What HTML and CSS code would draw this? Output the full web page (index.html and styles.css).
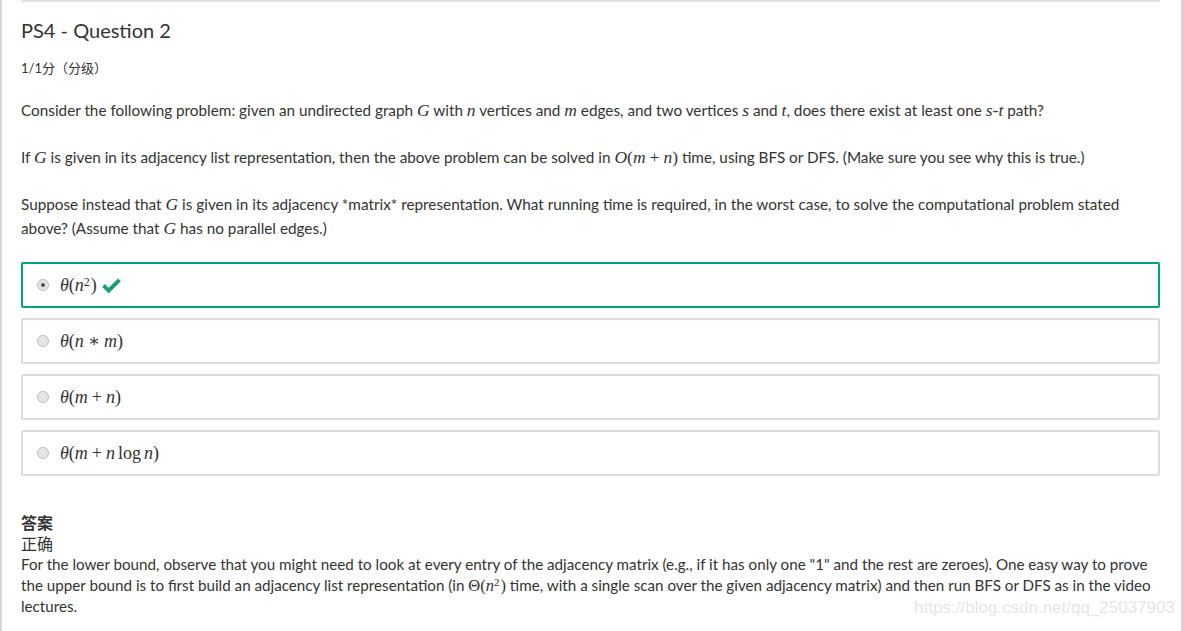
FILE: index.html
```html
<!DOCTYPE html>
<html lang="zh-CN">
<head>
  <meta charset="UTF-8" />
  <title>PS4 - Question 2</title>
  <link rel="stylesheet" href="styles.css">
</head>
<body>
  <div class="page">
    <div class="question">
      <h2 class="qTitle">PS4 - Question 2</h2>
      <div class="score">1/1分（分级）</div>

      <p class="first">Consider the following problem: given an undirected graph <span class="m">G</span> with <span class="m">n</span> vertices and <span class="m">m</span> edges, and two vertices <span class="m">s</span> and <span class="m">t</span>, does there exist at least one <span class="m">s</span><span class="r">-</span><span class="m">t</span> path?</p>
      <p>If <span class="m">G</span> is given in its adjacency list representation, then the above problem can be solved in <span class="m">O</span><span class="r">(</span><span class="m">m</span><span class="r op">+</span><span class="m">n</span><span class="r">)</span> time, using BFS or DFS. (Make sure you see why this is true.)</p>
      <p>Suppose instead that <span class="m">G</span> is given in its adjacency *matrix* representation. What running time is required, in the worst case, to solve the computational problem stated above? (Assume that <span class="m">G</span> has no parallel edges.)</p>

      <div class="options">
        <div class="option correct">
          <span class="radio checked"></span>
          <span class="math"><span class="m">θ</span><span class="r">(</span><span class="m">n</span><sup class="r">2</sup><span class="r">)</span></span>
          <svg class="check" viewBox="0 0 20 16" width="19" height="15"><path d="M1.5 8 L7 13.5 L18.5 2" fill="none" stroke="#1a9e77" stroke-width="4.2" stroke-linejoin="miter"/></svg>
        </div>
        <div class="option">
          <span class="radio"></span>
          <span class="math"><span class="m">θ</span><span class="r">(</span><span class="m">n</span><span class="r op">∗</span><span class="m">m</span><span class="r">)</span></span>
        </div>
        <div class="option">
          <span class="radio"></span>
          <span class="math"><span class="m">θ</span><span class="r">(</span><span class="m">m</span><span class="r op">+</span><span class="m">n</span><span class="r">)</span></span>
        </div>
        <div class="option">
          <span class="radio"></span>
          <span class="math"><span class="m">θ</span><span class="r">(</span><span class="m">m</span><span class="r op">+</span><span class="m">n</span><span class="r fn">log</span><span class="m">n</span><span class="r">)</span></span>
        </div>
      </div>

      <div class="answer">
        <div class="ansHead">答案</div>
        <div class="ansState">正确</div>
        <div class="ansText">For the lower bound, observe that you might need to look at every entry of the adjacency matrix (e.g., if it has only one "1" and the rest are zeroes). One easy way to prove the upper bound is to first build an adjacency list representation (in <span class="r">Θ(</span><span class="m">n</span><sup class="r">2</sup><span class="r">)</span> time, with a single scan over the given adjacency matrix) and then run BFS or DFS as in the video lectures.</div>
      </div>
      <div class="watermark">https://blog.csdn.net/qq_25037903</div>
    </div>
  </div>
</body>
</html>
```

FILE: styles.css
```css
/* page frame */
body {
  margin: 0;
  background: #fff;
  color: #333;
  font-family: "Source Sans Pro", Lato, "Noto Sans CJK SC", sans-serif;
}
.page {
  border-left: 2px solid #d6d6d6;
  border-right: 2px solid #d6d6d6;
  height: 631px;
  padding: 0 21px 0 19px;
  overflow: hidden;
}
.question {
  border-top: 2px solid #e2e2e2;
}
.qTitle {
  margin: 14px 0 0;
  font-size: 20px;
  font-weight: normal;
  line-height: 28px;
  color: #333;
}
.score {
  font-size: 13px;
  margin-top: 14px;
  line-height: 20px;
}
p {
  font-size: 15.3px;
  line-height: 24px;
  margin: 23px 0 0;
}
p.first {
  margin-top: 20px;
}
.m {
  font-family: "Liberation Serif", "DejaVu Serif", serif;
  font-style: italic;
  font-size: 17.5px;
}
.r {
  font-family: "Liberation Serif", "DejaVu Serif", serif;
  font-size: 17.5px;
}
.op {
  margin: 0 4px;
}
.fn {
  margin: 0 3px 0 3px;
}
sup.r {
  font-size: 12px;
  position: relative;
  top: -3px;
  vertical-align: top;
  margin-right: 1px;
}
.options {
  margin-top: 22px;
  display: flex;
  flex-direction: column;
  gap: 10px;
}
.option {
  border: 2px solid #dcdcdc;
  border-radius: 2px;
  height: 42px;
  display: flex;
  align-items: center;
  padding-left: 14px;
}
.option.correct {
  border-color: #00a37a;
}
.math {
  white-space: nowrap;
  line-height: 24px;
}
.math .m, .math .r {
  font-size: 18px;
}
.math sup.r {
  font-size: 12px;
}
.radio {
  width: 10px;
  height: 10px;
  border-radius: 50%;
  border: 1px solid #bbb;
  background: #e6e6e6;
  margin-right: 11px;
  position: relative;
}
.radio.checked::after {
  content: "";
  position: absolute;
  left: 3px;
  top: 3px;
  width: 4px;
  height: 4px;
  border-radius: 50%;
  background: #555;
}
.check {
  margin-left: 5px;
}
.answer {
  margin-top: 36px;
  font-size: 15.2px;
  line-height: 21px;
}
.ansHead {
  font-weight: bold;
  font-size: 16px;
}
.ansState {
  font-size: 16px;
}
.ansText {
  line-height: 21px;
}
.ansText .m, .ansText .r {
  font-size: 16.5px;
}
.ansText sup.r {
  font-size: 11px;
}
.watermark {
  text-align: right;
  font-family: "Liberation Sans", Arial, sans-serif;
  font-size: 17px;
  color: #e6e6e6;
  margin-top: -19px;
  margin-right: -15px;
}
```
